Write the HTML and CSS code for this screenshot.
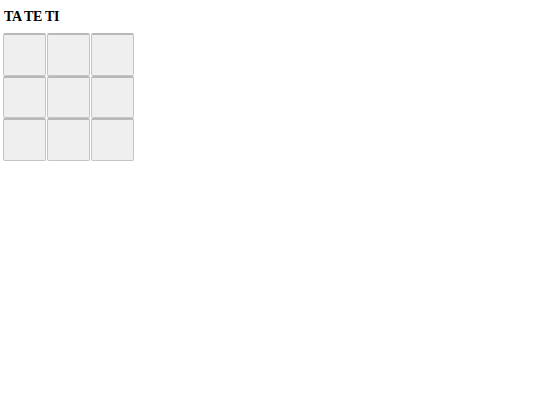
FILE: index.html
```html
<!DOCTYPE html>
<html lang="es">
<head>
<meta charset="utf-8">
<title>TA TE TI</title>
<link rel="stylesheet" href="styles.css">
</head>
<body>
<h1 class="title">TA TE TI</h1>
<div class="board">
  <button class="cell"></button>
  <button class="cell"></button>
  <button class="cell"></button>
  <button class="cell"></button>
  <button class="cell"></button>
  <button class="cell"></button>
  <button class="cell"></button>
  <button class="cell"></button>
  <button class="cell"></button>
</div>
</body>
</html>
```
FILE: styles.css
```css
body {
  margin: 3px;
  background: #ffffff;
  font-family: "Liberation Serif", serif;
}

.title {
  font-size: 14px;
  font-weight: bold;
  letter-spacing: -0.3px;
  margin: 6px 0 8px 1px;
  line-height: 16px;
  color: #000;
}

.board {
  display: grid;
  grid-template-columns: repeat(3, 43px);
  grid-template-rows: 43px 42px 43px;
  column-gap: 1px;
}

.cell {
  appearance: none;
  margin: 0;
  padding: 0;
  background: #efefef;
  border: 1px solid #c4c4c4;
  border-top: 2px solid #b8b8b8;
  border-radius: 2px;
}
```
